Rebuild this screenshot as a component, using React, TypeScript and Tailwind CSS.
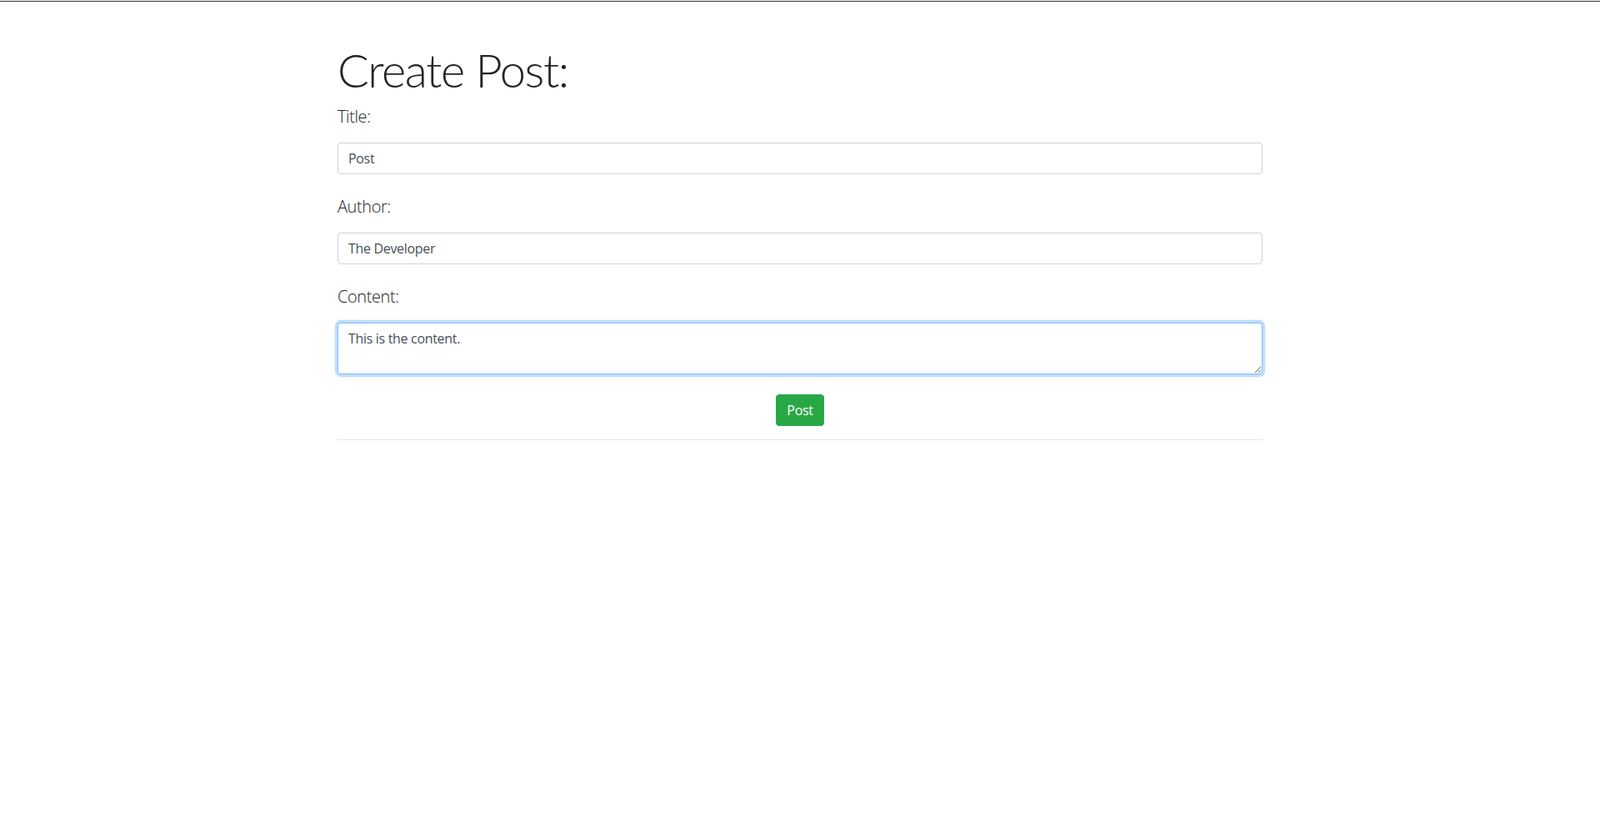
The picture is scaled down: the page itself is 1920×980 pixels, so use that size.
import { useState } from "react";

export default function App() {
  const [title, setTitle] = useState("Post");
  const [author, setAuthor] = useState("The Developer");
  const [content, setContent] = useState("This is the content.");

  const inputClass =
    "block h-[38px] w-full rounded border border-[#ced4da] bg-white px-3 py-1.5 text-base leading-6 tracking-[-0.02em] text-[#495057] focus:outline-none";

  return (
    <div className="min-h-screen bg-white font-['Open_Sans',sans-serif] text-[#212529]">
      <div className="mt-px h-px bg-[#333]" />
      <div className="mx-auto w-[1140px] px-[15px] pt-12">
        <h1 className="mb-2 font-['Lato',sans-serif] text-[56px] font-light leading-[1.2] tracking-[-0.025em]">
          Create Post:
        </h1>

        <form onSubmit={(e) => e.preventDefault()}>
          <p className="mb-4 text-xl font-light leading-[30px] tracking-[-0.02em]">Title:</p>
          <input
            type="text"
            value={title}
            onChange={(e) => setTitle(e.target.value)}
            className={inputClass}
          />

          <p className="mb-4 mt-6 text-xl font-light leading-[30px] tracking-[-0.02em]">Author:</p>
          <input
            type="text"
            value={author}
            onChange={(e) => setAuthor(e.target.value)}
            className={inputClass}
          />

          <p className="mb-4 mt-6 text-xl font-light leading-[30px] tracking-[-0.02em]">Content:</p>
          <textarea
            rows={2}
            value={content}
            onChange={(e) => setContent(e.target.value)}
            className="block h-[62px] w-full rounded border border-[#80bdff] bg-white px-3 py-1.5 text-base leading-6 tracking-[-0.02em] text-[#495057] shadow-[0_0_0_0.2rem_rgba(0,123,255,0.25)] outline-none"
          />

          <div className="mt-6 text-center">
            <button
              type="submit"
              className="h-[38px] rounded border border-[#28a745] bg-[#28a745] px-3 text-base leading-6 tracking-[-0.02em] text-white hover:bg-[#218838]"
            >
              Post
            </button>
          </div>
        </form>

        <hr className="mt-4 border-t border-[rgba(0,0,0,0.1)]" />
      </div>
    </div>
  );
}
